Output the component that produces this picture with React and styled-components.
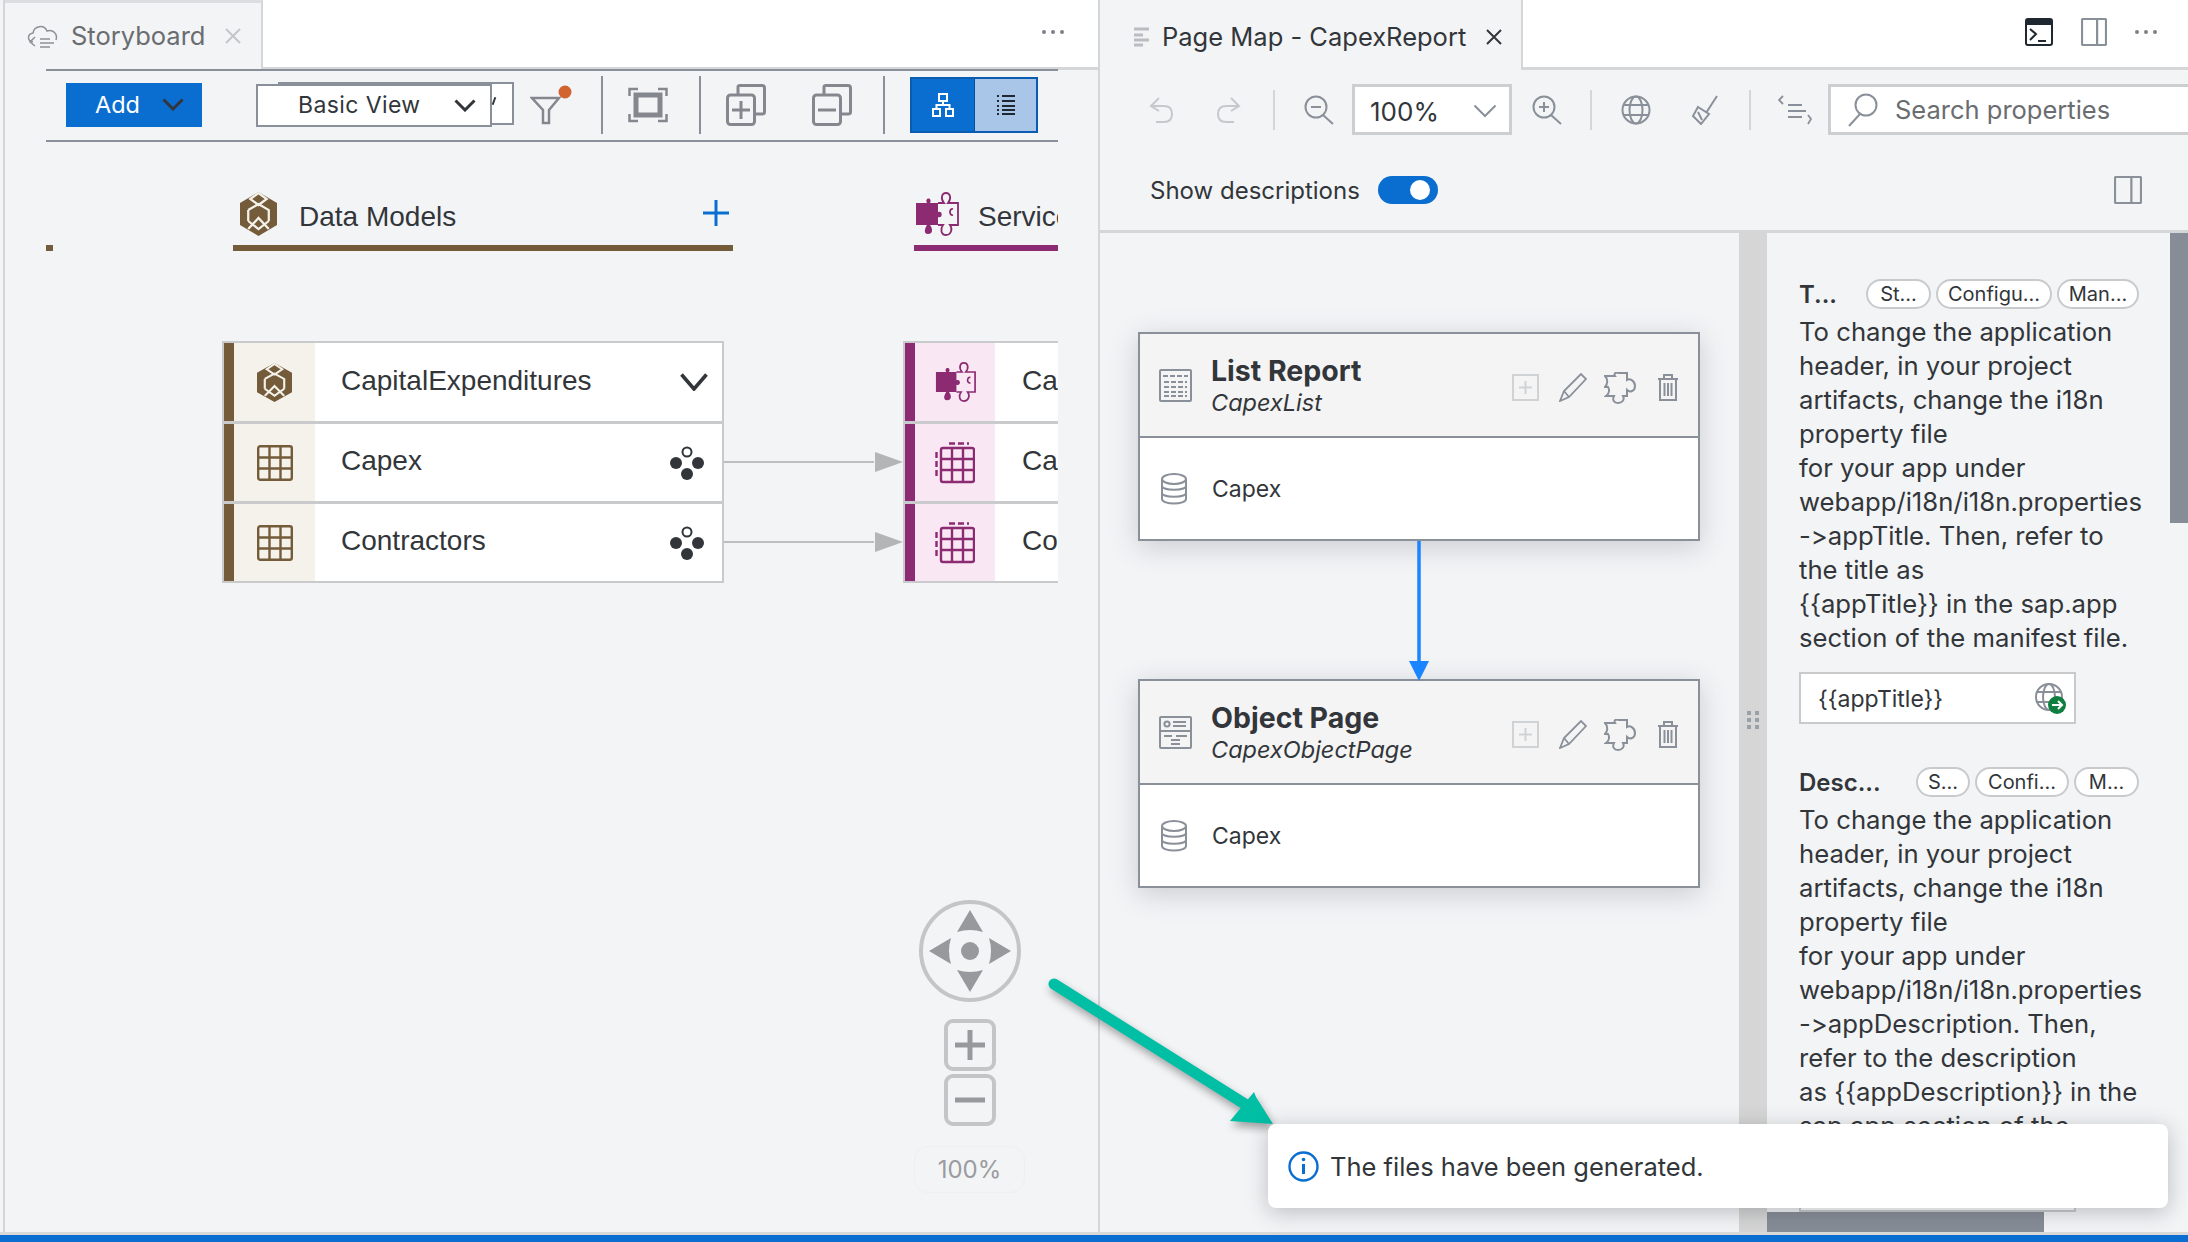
import React from 'react';
import styled, { createGlobalStyle } from 'styled-components';

const GlobalStyle = createGlobalStyle`
  html, body { margin: 0; padding: 0; background: #f3f4f6; }
  * { box-sizing: border-box; }
`;

const SANS = `Inter, "Liberation Sans", sans-serif`;
const ARIAL = `"Liberation Sans", Arial, sans-serif`;
const BROWN = '#745b39';
const MAGENTA = '#8c2a72';
const GREY = '#8a909a';

const Page = styled.div`
  position: relative;
  width: 2188px;
  height: 1242px;
  display: flex;
  flex-direction: column;
  overflow: hidden;
  background: #f3f4f6;
  font-family: ${SANS};
  font-variant-ligatures: none;
  font-feature-settings: 'calt' 0;
  color: #32363a;
`;
const Main = styled.div`
  flex: 1;
  min-height: 0;
  display: flex;
`;
const StatusBar = styled.div`
  height: 10px;
  flex: none;
  background: #0a6ed1;
  border-top: 3px solid #d9d9d9;
`;

/* tabs */
const TabBar = styled.div`
  height: 70px;
  flex: none;
  display: flex;
  align-items: stretch;
`;
const Tab = styled.div`
  width: ${p => p.$width}px;
  flex: none;
  display: flex;
  align-items: center;
  gap: ${p => p.$gap}px;
  padding-left: ${p => p.$pad}px;
  padding-top: ${p => (p.$muted ? 0 : 3)}px;
  padding-bottom: ${p => (p.$muted ? 2 : 0)}px;
  font-size: 25.5px;
  color: ${p => (p.$muted ? '#6a6d70' : '#32363a')};
  border-right: 2px solid #d5d6d8;
  border-top: ${p => (p.$muted ? '3px solid #dcdde0' : '0')};
`;
const TabClose = styled.span`
  display: flex;
  margin-left: ${p => p.$left}px;
`;
const TabRest = styled.div`
  flex: 1;
  background: #fff;
  border-bottom: 3px solid #d5d6d8;
  display: flex;
  align-items: center;
  justify-content: flex-end;
  gap: 28px;
  padding: 0 ${p => p.$pad}px 4px 0;
`;
const Dots = styled.span`
  display: flex;
  gap: 5px;
  & > i {
    width: 4px;
    height: 4px;
    border-radius: 50%;
    background: #7d8187;
  }
`;

/* left pane */
const LeftPane = styled.section`
  position: relative;
  width: 1100px;
  flex: none;
  display: flex;
  flex-direction: column;
  padding-left: 4px;
  border-right: 2px solid #d5d6d8;
  background: #f3f4f6;
  &::before {
    content: '';
    position: absolute;
    left: 3px;
    top: 0;
    bottom: 0;
    width: 2px;
    background: #d5d6d8;
  }
`;
const LeftBody = styled.div`
  width: 1012px;
  margin-left: 42px;
  flex: 1;
  display: flex;
  flex-direction: column;
  min-height: 0;
`;
const Toolbar = styled.div`
  height: 73px;
  flex: none;
  display: flex;
  align-items: center;
  border-top: 2px solid ${GREY};
  border-bottom: 2px solid ${GREY};
  margin-top: -1px;
  padding: 0 0 2px 20px;
`;
const AddButton = styled.div`
  width: 136px;
  height: 44px;
  background: #0a6ed1;
  color: #fff;
  font-size: 23.5px;
  display: flex;
  align-items: center;
  gap: 22px;
  padding-left: 29px;
`;
const SelectStack = styled.div`
  position: relative;
  width: 258px;
  height: 44px;
  margin-left: 54px;
`;
const SelectBack = styled.div`
  position: absolute;
  right: 0;
  top: -1px;
  width: 236px;
  height: 43px;
  background: #fff;
  border: 2px solid ${GREY};
  &::after {
    content: '';
    position: absolute;
    left: 213px;
    top: 13px;
    width: 2px;
    height: 8px;
    background: #32363a;
    transform: rotate(20deg);
  }
`;
const SelectFront = styled.div`
  position: absolute;
  left: 0;
  top: 1px;
  width: 236px;
  height: 43px;
  background: #fff;
  border: 2px solid ${GREY};
  font-size: 23px;
  letter-spacing: 0.4px;
  display: flex;
  align-items: center;
  justify-content: space-between;
  padding: 0 14px 0 40px;
`;
const ToolIcon = styled.span`
  display: flex;
  margin-left: ${p => p.$left || 0}px;
`;
const ToolSep = styled.span`
  width: 2px;
  height: 58px;
  background: ${GREY};
  margin-left: ${p => p.$left}px;
`;
const ViewSwitch = styled.div`
  display: flex;
  width: 128px;
  height: 56px;
  margin-left: 25px;
  border: 2px solid #0a5cb0;
`;
const SwitchBtn = styled.div`
  flex: ${p => (p.$on ? '0 0 63px' : '1')};
  background: ${p => (p.$on ? '#0a6ed1' : '#a9c5e8')};
  display: flex;
  align-items: center;
  justify-content: center;
  border-right: ${p => (p.$on ? '1px solid #0a4f99' : '0')};
`;

const Columns = styled.div`
  flex: none;
  display: flex;
  overflow: hidden;
  height: 450px;
  padding-top: 50px;
`;
const TickMark = styled.span`
  width: 7px;
  height: 6px;
  background: ${BROWN};
  margin-top: 53px;
  flex: none;
`;
const ModelColumn = styled.div`
  flex: none;
  width: ${p => p.$width}px;
  margin-left: ${p => p.$left}px;
`;
const ColumnHead = styled.div`
  height: 59px;
  display: flex;
  align-items: flex-start;
  padding-left: ${p => p.$pad}px;
  gap: ${p => p.$gap}px;
  border-bottom: 6px solid ${p => p.$color};
  font-family: ${ARIAL};
  font-size: 28px;
  white-space: nowrap;
  & > svg { flex: none; }
`;
const HeadLabel = styled.span`
  margin-top: 9px;
`;
const HeadPlus = styled.span`
  margin-left: auto;
  margin-right: 4px;
  margin-top: 8px;
  display: flex;
`;

const Tables = styled.div`
  display: flex;
  align-items: flex-start;
  margin-top: 90px;
  margin-left: -11px;
`;
const EntityTable = styled.div`
  width: ${p => p.$width}px;
  flex: none;
  border: 2px solid #c9cacc;
  border-width: ${p => (p.$open ? '2px 0 2px 2px' : '2px')};
  background: #fff;
`;
const EntityRow = styled.div`
  height: 80px;
  display: flex;
  align-items: center;
  border-top: ${p => (p.$first ? 0 : '3px solid #c9cacc')};
  font-family: ${ARIAL};
  font-size: 28px;
  white-space: nowrap;
  overflow: hidden;
  &:first-child { height: 78px; }
`;
const EntityIcon = styled.span`
  width: ${p => p.$w}px;
  flex: none;
  align-self: stretch;
  background: ${p => p.$bg};
  border-left: 10px solid ${p => p.$color};
  display: flex;
  align-items: center;
  justify-content: center;
`;
const EntityName = styled.span`
  margin-left: ${p => p.$left}px;
  flex: 1;
  padding-bottom: 3px;
`;
const EntityAction = styled.span`
  display: flex;
  margin-right: ${p => p.$right}px;
`;
const Links = styled.div`
  width: 179px;
  flex: none;
  padding-top: 81px;
`;
const LinkSlot = styled.div`
  height: 80px;
  display: flex;
  align-items: center;
`;

const NavControl = styled.div`
  position: absolute;
  left: 914px;
  top: 900px;
  width: 111px;
  display: flex;
  flex-direction: column;
  align-items: center;
`;
const ZoomBox = styled.div`
  width: 52px;
  height: 52px;
  margin-top: ${p => p.$top}px;
  border: 4px solid #c4c5c7;
  border-radius: 9px;
  display: flex;
  align-items: center;
  justify-content: center;
`;
const ZoomLevel = styled.div`
  width: 111px;
  height: 47px;
  margin-top: 20px;
  border: 1px solid #eeeff1;
  border-radius: 14px;
  font-size: 24px;
  color: #9a9c9f;
  display: flex;
  align-items: center;
  justify-content: center;
`;

/* right pane */
const RightPane = styled.section`
  flex: 1;
  min-width: 0;
  display: flex;
  flex-direction: column;
`;
const PropBar = styled.div`
  height: 51px;
  flex: none;
  display: flex;
  align-items: center;
  margin-top: 14px;
`;
const BarIcon = styled.span`
  display: flex;
  flex: none;
  margin-left: ${p => p.$left}px;
`;
const BarSep = styled.span`
  width: 2px;
  height: 40px;
  flex: none;
  background: #d5d6d8;
  margin-left: ${p => p.$left}px;
`;
const ZoomSelect = styled.div`
  width: 160px;
  height: 51px;
  flex: none;
  margin-left: 18px;
  background: #fff;
  border: 3px solid #ccced0;
  font-size: 26px;
  display: flex;
  align-items: center;
  justify-content: space-between;
  padding: 3px 12px 0 15px;
`;
const SearchBox = styled.div`
  flex: 1;
  height: 51px;
  margin-left: 16px;
  margin-right: -4px;
  background: #fff;
  border: 3px solid #ccced0;
  font-size: 25.5px;
  color: #6a6d70;
  display: flex;
  align-items: center;
  gap: 17px;
  padding-left: 17px;
`;
const DescRow = styled.div`
  height: 98px;
  flex: none;
  display: flex;
  align-items: center;
  padding: 15px 46px 0 50px;
  font-size: 24px;
  border-bottom: 3px solid #d5d6d8;
`;
const Toggle = styled.span`
  width: 60px;
  height: 28px;
  border-radius: 14px;
  background: #0a6ed1;
  margin-left: 18px;
  display: flex;
  align-items: center;
  justify-content: flex-end;
  padding-right: 8px;
  & > i {
    width: 20px;
    height: 20px;
    border-radius: 50%;
    background: #fff;
  }
`;
const DescAside = styled.span`
  margin-left: auto;
  display: flex;
`;
const PropBody = styled.div`
  flex: 1;
  min-height: 0;
  display: flex;
`;
const Canvas = styled.div`
  width: 639px;
  flex: none;
  padding: 99px 0 0 38px;
`;
const PageCard = styled.div`
  width: 562px;
  height: 209px;
  border: 2px solid ${GREY};
  background: #fff;
  box-shadow: 0 6px 26px rgba(60, 66, 76, 0.22);
  display: flex;
  flex-direction: column;
`;
const CardHead = styled.div`
  height: 104px;
  flex: none;
  background: #f4f4f4;
  border-bottom: 2px solid ${GREY};
  display: flex;
  align-items: center;
  padding: 1px 0 0 19px;
`;
const CardTitles = styled.div`
  margin-left: 19px;
  flex: 1;
`;
const CardTitle = styled.div`
  font-size: 28.5px;
  line-height: 34px;
  font-weight: 700;
`;
const CardSub = styled.div`
  font-size: 23.5px;
  line-height: 30px;
  font-style: italic;
`;
const CardTools = styled.div`
  display: flex;
  align-items: center;
  gap: 21px;
  padding: 4px 19px 0 0;
  & > svg:nth-child(1) { margin-right: -1px; }
  & > svg:nth-child(2) { margin-right: -4px; }
`;
const CardRow = styled.div`
  flex: 1;
  display: flex;
  align-items: center;
  padding-left: 21px;
  gap: 25px;
  font-size: 23px;
`;
const Connector = styled.div`
  width: 562px;
  height: 140px;
  display: flex;
  justify-content: center;
  position: relative;
  z-index: 1;
  margin-bottom: -2px;
`;
const Splitter = styled.div`
  width: 28px;
  flex: none;
  background: #d6d6d6;
  display: flex;
  align-items: center;
  justify-content: center;
`;
const GripDots = styled.span`
  display: grid;
  grid-template-columns: 4px 4px;
  gap: 3px 4px;
  margin-top: -26px;
  & > i { width: 4px; height: 4px; background: #9aa0a8; }
`;
const Props = styled.div`
  flex: 1;
  min-width: 0;
  position: relative;
  overflow: hidden;
  padding: 46px 0 0 32px;
`;
const PropSection = styled.div`
  margin-bottom: 43px;
`;
const PropHead = styled.div`
  height: 30px;
  display: flex;
  align-items: center;
`;
const PropName = styled.div`
  width: ${p => p.$w}px;
  flex: none;
  font-size: 24px;
  font-weight: 600;
`;
const Pill = styled.span`
  height: 30px;
  width: ${p => p.$w}px;
  flex: none;
  margin-right: 5px;
  border: 2px solid #c9cacc;
  border-radius: 15px;
  background: #fff;
  font-size: 20px;
  display: flex;
  align-items: center;
  justify-content: center;
`;
const PropText = styled.div`
  margin-top: 6px;
  font-size: 25.7px;
  line-height: 34px;
  white-space: nowrap;
`;
const PropInput = styled.div`
  width: 277px;
  height: 52px;
  margin-top: 17px;
  background: #fff;
  border: 2px solid #c9cacc;
  font-size: 23px;
  display: flex;
  align-items: center;
  justify-content: space-between;
  padding: 2px 7px 0 17px;
`;
const Thumb = styled.div`
  position: absolute;
  background: #878d97;
  ${p => p.$vertical
    ? 'right: 0; top: 0; width: 18px; height: 290px;'
    : 'left: 0; bottom: 0; width: 277px; height: 20px;'}
`;

/* overlays */
const Toast = styled.div`
  position: absolute;
  left: 1268px;
  top: 1124px;
  width: 900px;
  height: 84px;
  background: #fff;
  border-radius: 8px;
  box-shadow: 0 4px 22px rgba(40, 44, 52, 0.28);
  display: flex;
  align-items: center;
  gap: 11px;
  padding: 0 0 0 20px;
  font-size: 25.5px;
`;
const CalloutArrow = styled.svg`
  position: absolute;
  left: 1040px;
  top: 970px;
  overflow: visible;
  filter: drop-shadow(2px 5px 4px rgba(0, 0, 0, 0.35));
`;

/* icons */
const Stroke = ({ w, h, color = GREY, sw = 2, children }) => (
  <svg width={w} height={h} viewBox={`0 0 ${w} ${h}`} fill="none" stroke={color} strokeWidth={sw}>{children}</svg>
);
const Chevron = ({ w = 22, h = 13, color = '#32363a', sw = 3 }) => (
  <Stroke w={w} h={h} color={color} sw={sw}><path d={`M1.5 1.5 L${w / 2} ${h - 2} L${w - 1.5} 1.5`} /></Stroke>
);
const CloudIcon = () => (
  <Stroke w={34} h={26} color="#8d9095" sw={1.5}>
    <path d="M7 19 C1 18 1 11 7 10 C8 3 18 1 21 8 C27 6 32 11 30 17" />
    <path d="M9 14 L4 19 L9 23 M14 16 h10 M14 20 h14 M14 24 h10" />
  </Stroke>
);
const CloseX = ({ color }) => (
  <Stroke w={18} h={18} color={color} sw={2}><path d="M2 2 L16 16 M16 2 L2 16" /></Stroke>
);
const FilterIcon = () => (
  <svg width={42} height={40} viewBox="0 0 42 40" fill="none">
    <path d="M2 13 H29 L19 25 V38 H13 V25 Z" stroke="#84888e" strokeWidth="2.5" />
    <circle cx="35" cy="7" r="6.5" fill="#d2652f" />
  </svg>
);
const FitIcon = () => (
  <svg width={40} height={36} viewBox="0 0 40 36" fill="none" stroke="#84888e">
    <path d="M1.5 9 V2 H10 M30 2 H38.5 V9 M1.5 27 V34 H10 M30 34 H38.5 V27" strokeWidth="2.5" />
    <rect x="8" y="8" width="24" height="20" strokeWidth="5" />
  </svg>
);
const StackIcon = ({ plus }) => (
  <svg width={40} height={42} viewBox="0 0 40 42" fill="none" stroke="#84888e" strokeWidth="3">
    <path d="M12 11 V3 Q12 1.5 14 1.5 H36 Q38.5 1.5 38.5 4 V28 Q38.5 30 36 30 H29" />
    <rect x="1.5" y="11" width="27" height="29.5" rx="3" />
    <path d={plus ? 'M15 17 V35 M6 26 H24' : 'M6 26 H24'} />
  </svg>
);
const TreeIcon = () => (
  <Stroke w={22} h={24} color="#fff" sw={2}>
    <rect x="7" y="1" width="8" height="7" />
    <rect x="1" y="16" width="7" height="7" />
    <rect x="14" y="16" width="7" height="7" />
    <path d="M11 8 V12 M4.5 16 V12 H17.5 V16" />
  </Stroke>
);
const ListIcon = () => (
  <Stroke w={20} h={22} color="#1f2730" sw={2}>
    <path d="M1 2 H3 M6 2 H19 M1 7 H3 M6 7 H19 M1 12 H3 M6 12 H19 M1 16 H3 M6 16 H19 M1 20 H3 M6 20 H19" />
  </Stroke>
);
const CubeIcon = ({ w = 37, h = 44 }) => (
  <svg width={w} height={h} viewBox="0 0 36 44" fill="none" preserveAspectRatio="none">
    <path d="M18 0 L36 11 V33 L18 44 L0 33 V11 Z" fill={BROWN} />
    <path d="M10 7 L18 1 L26 7 L18 13 Z M8 18 L18 12 L28 18 V29 M8 29 V18 M8 29 L18 37 L28 29 M8 37 L18 26 L28 37" stroke="#f5f2ec" strokeWidth="2.2" />
  </svg>
);
const PuzzleIcon = ({ w = 44, h = 44 }) => (
  <svg width={w} height={h} viewBox="0 0 44 44" fill="none" preserveAspectRatio="none">
    <path d="M1 11 H12 C9 5 18 5 15 11 H23 V20 C28 18 28 27 23 25 V33 H15 C18 37 18 42 13 42 C8 42 10 36 12 33 H1 Z" fill={MAGENTA} />
    <path d="M23 11 H29 C25 6 27 1 31 1 C35 1 37 6 33 11 H43 V33 H35 C38 37 36 43 31 43 C26 43 25 37 28 33 H23" stroke={MAGENTA} strokeWidth="1.8" />
    <path d="M38 17 C34 16 34 24 38 23" stroke={MAGENTA} strokeWidth="1.8" />
  </svg>
);
const GridIcon = () => (
  <svg width={36} height={36} viewBox="0 0 36 36" fill="none" stroke={BROWN} strokeWidth="2.4">
    <rect x="1.2" y="1.2" width="33.6" height="33.6" rx="2" />
    <path d="M12.5 1 V35 M23.5 1 V35 M1 12.5 H35 M1 23.5 H35" />
  </svg>
);
const DashedGridIcon = () => (
  <svg width={40} height={42} viewBox="0 0 40 42" fill="none" stroke={MAGENTA} strokeWidth="2.4">
    <rect x="6" y="6" width="33" height="34" rx="2" />
    <path d="M17 6 V40 M28 6 V40 M6 17 H39 M6 28 H39" />
    <path d="M14 1.5 H34 M1.5 10 V36" strokeDasharray="6 3" />
  </svg>
);
const DotsIcon = () => (
  <svg width={34} height={34} viewBox="0 0 34 34" fill="#32363a">
    <circle cx="17" cy="6" r="4.5" fill="none" stroke="#32363a" strokeWidth="2" />
    <circle cx="6" cy="17" r="6" />
    <circle cx="28" cy="17" r="6" />
    <circle cx="17" cy="28" r="6" />
  </svg>
);
const LinkArrow = () => (
  <svg width={179} height={22} viewBox="0 0 179 22">
    <path d="M0 11 H150" stroke="#bdbebf" strokeWidth="2" />
    <path d="M151 1 L179 11 L151 21 Z" fill="#b4b5b6" />
  </svg>
);
const PlusMark = ({ size = 26, color = '#0a6ed1', sw = 3 }) => (
  <Stroke w={size} h={size} color={color} sw={sw}>
    <path d={`M${size / 2} 0 V${size} M0 ${size / 2} H${size}`} />
  </Stroke>
);
const PagesIcon = () => (
  <svg width={18} height={20} viewBox="0 0 18 20" stroke="#b9bcc0" strokeWidth="3">
    <path d="M1 2 H16 M1 8 H10 M1 13 H16 M1 18 H10" />
  </svg>
);
const TerminalIcon = () => (
  <svg width={28} height={28} viewBox="0 0 28 28" fill="none">
    <rect x="1" y="1" width="26" height="26" rx="2" stroke="#1f2730" strokeWidth="2" />
    <rect x="1" y="1" width="26" height="6" fill="#1f2730" />
    <path d="M5 11 L11 16 L5 22 M13 23 H21" stroke="#1f2730" strokeWidth="2" />
  </svg>
);
const SplitIcon = ({ h = 28, w = 26 }) => (
  <Stroke w={w} h={h} sw={2.2}>
    <rect x="1" y="1" width={w - 2} height={h - 2} rx="1" />
    <path d={`M${w * 0.62} 1 V${h - 1}`} />
  </Stroke>
);
const UndoIcon = ({ flip }) => (
  <svg width={25} height={26} viewBox="0 0 25 26" fill="none" stroke="#c5c8cc" strokeWidth="2" style={flip ? { transform: 'scaleX(-1)' } : undefined}>
    <path d="M10 1 L2 9 L10 14 M2 9 H15 C21 9 23 13 23 17 C23 22 20 25 15 25 H7" />
  </svg>
);
const MagnifierIcon = ({ plus }) => (
  <Stroke w={30} h={30} sw={2}>
    <circle cx="12" cy="12" r="10.5" />
    <path d="M19 20 L29 29" />
    <path d={plus ? 'M12 7 V17 M7 12 H17' : 'M7 12 H17'} />
  </Stroke>
);
const GlobeIcon = ({ size = 30 }) => (
  <svg width={size} height={size} viewBox="0 0 30 30" fill="none" stroke={GREY} strokeWidth="2">
    <circle cx="15" cy="15" r="13.5" />
    <ellipse cx="15" cy="15" rx="6.5" ry="13.5" />
    <path d="M2 10 H28 M2 20 H28" />
  </svg>
);
const BrushIcon = () => (
  <Stroke w={28} h={30}>
    <path d="M27 1 L16 18 M8 12 L19 19 L11 29 L3 21 Z M8 17 L12 25" />
  </Stroke>
);
const OutlineIcon = () => (
  <Stroke w={34} h={30} sw={1.8}>
    <path d="M5 1 L1 5 L5 9 M10 10 H24 M10 16 H28 M10 22 H24 M30 20 L33 24 L30 29" />
  </Stroke>
);
const SearchGlass = () => (
  <Stroke w={30} h={34} sw={2}>
    <circle cx="18" cy="12" r="10.5" />
    <path d="M12 21 L1 33" />
  </Stroke>
);
const SheetIcon = () => (
  <svg width={33} height={33} viewBox="0 0 33 33" fill="none" stroke={GREY} strokeWidth="2">
    <rect x="1" y="1" width="31" height="31" rx="1" />
    <path d="M4 7 H29 M5 13 H28 M5 18 H28 M5 23 H28 M5 27 H28" strokeDasharray="5 2" />
  </svg>
);
const ObjectIcon = () => (
  <svg width={33} height={33} viewBox="0 0 33 33" fill="none" stroke={GREY} strokeWidth="2">
    <rect x="1" y="1" width="31" height="31" rx="1" />
    <circle cx="8" cy="8" r="2.6" />
    <path d="M14 6 H27 M14 10 H27 M1 15 H32 M5 20 H13 M17 20 H28 M12 24 H21 M12 28 H21" />
  </svg>
);
const DbIcon = () => (
  <Stroke w={26} h={32} sw={2}>
    <ellipse cx="13" cy="6" rx="12" ry="5" />
    <path d="M1 6 V26 C1 32 25 32 25 26 V6 M1 13 C1 18 25 18 25 13 M1 20 C1 25 25 25 25 20" />
  </Stroke>
);
const AddSquare = () => (
  <Stroke w={27} h={27} color="#d0d3d6" sw={2}>
    <rect x="1" y="1" width="25" height="25" />
    <path d="M13.5 7 V20 M7 13.5 H20" />
  </Stroke>
);
const PencilIcon = () => (
  <Stroke w={28} h={29} sw={1.8}>
    <path d="M1 28 L5 18 L22 1 L27 6 L10 24 Z M5 18 L10 24" />
  </Stroke>
);
const PuzzleOutline = () => (
  <Stroke w={32} h={32} sw={2}>
    <path d="M1 4 H11 C9 1 13 0 15 1 H23 V8 C26 6 31 9 31 14 C31 19 26 21 23 18 V24 H19 C21 28 18 31 14 31 C10 31 8 28 10 24 H2 C5 22 6 18 4 15 L1 15 C4 12 4 7 1 4 Z" />
  </Stroke>
);
const TrashIcon = () => (
  <Stroke w={22} h={27} sw={2}>
    <path d="M1 5 H21 M7 5 V1 H15 V5 M3 5 V26 H19 V5 M7.5 9 V22 M11 9 V22 M14.5 9 V22" />
  </Stroke>
);
const TranslateIcon = () => (
  <svg width={32} height={32} viewBox="0 0 32 32" fill="none">
    <circle cx="14" cy="14" r="13" stroke={GREY} strokeWidth="2" />
    <ellipse cx="14" cy="14" rx="6" ry="13" stroke={GREY} strokeWidth="2" />
    <path d="M1 9 H27 M1 19 H27" stroke={GREY} strokeWidth="2" />
    <circle cx="22" cy="22" r="9" fill="#107e3e" />
    <path d="M17 22 H27 M23 18 L27 22 L23 26" stroke="#fff" strokeWidth="2" />
  </svg>
);
const NavPad = () => (
  <svg width={102} height={102} viewBox="0 0 102 102">
    <circle cx="51" cy="51" r="49" fill="none" stroke="#c4c5c7" strokeWidth="4" />
    <g fill="#97999c">
      <path d="M51 10 L64 32 Q51 28 38 32 Z" />
      <path d="M51 92 L64 70 Q51 74 38 70 Z" />
      <path d="M10 51 L32 38 Q28 51 32 64 Z" />
      <path d="M92 51 L70 38 Q74 51 70 64 Z" />
      <circle cx="51" cy="51" r="9" />
    </g>
  </svg>
);
const InfoIcon = () => (
  <svg width={31} height={31} viewBox="0 0 31 31" fill="none">
    <circle cx="15.5" cy="15.5" r="14" stroke="#0a6ed1" strokeWidth="2.4" />
    <path d="M15.5 13 V23" stroke="#0a6ed1" strokeWidth="3" />
    <circle cx="15.5" cy="8.5" r="1.8" fill="#0a6ed1" />
  </svg>
);

const firstText = [
  'To change the application',
  'header, in your project',
  'artifacts, change the i18n',
  'property file',
  'for your app under',
  'webapp/i18n/i18n.properties',
  '->appTitle. Then, refer to',
  'the title as',
  '{{appTitle}} in the sap.app',
  'section of the manifest file.',
];
const secondText = [
  'To change the application',
  'header, in your project',
  'artifacts, change the i18n',
  'property file',
  'for your app under',
  'webapp/i18n/i18n.properties',
  '->appDescription. Then,',
  'refer to the description',
  'as {{appDescription}} in the',
  'sap.app section of the',
];

const entities = [
  { name: 'CapitalExpenditures', service: 'Ca', head: true },
  { name: 'Capex', service: 'Ca' },
  { name: 'Contractors', service: 'Co' },
];

const PageNode = ({ icon, title, sub }) => (
  <PageCard>
    <CardHead>
      {icon}
      <CardTitles>
        <CardTitle>{title}</CardTitle>
        <CardSub>{sub}</CardSub>
      </CardTitles>
      <CardTools>
        <AddSquare />
        <PencilIcon />
        <PuzzleOutline />
        <TrashIcon />
      </CardTools>
    </CardHead>
    <CardRow>
      <DbIcon />
      Capex
    </CardRow>
  </PageCard>
);

const PropBlock = ({ name, nameWidth, pills, lines, value }) => (
  <PropSection>
    <PropHead>
      <PropName $w={nameWidth}>{name}</PropName>
      {pills.map(p => <Pill key={p.label} $w={p.w}>{p.label}</Pill>)}
    </PropHead>
    <PropText>
      {lines.map(line => <div key={line}>{line}</div>)}
    </PropText>
    <PropInput>
      {value}
      <TranslateIcon />
    </PropInput>
  </PropSection>
);

export default function App() {
  return (
    <Page>
      <GlobalStyle />
      <Main>
        <LeftPane>
          <TabBar>
            <Tab $width={259} $pad={22} $gap={11} $muted>
              <CloudIcon />
              Storyboard
              <TabClose $left={8}><CloseX color="#c3c5c8" /></TabClose>
            </Tab>
            <TabRest $pad={34}>
              <Dots><i /><i /><i /></Dots>
            </TabRest>
          </TabBar>
          <LeftBody>
            <Toolbar>
              <AddButton>
                Add
                <Chevron />
              </AddButton>
              <SelectStack>
                <SelectBack />
                <SelectFront>
                  Basic View
                  <Chevron />
                </SelectFront>
              </SelectStack>
              <ToolIcon $left={16}><FilterIcon /></ToolIcon>
              <ToolSep $left={29} />
              <ToolIcon $left={25}><FitIcon /></ToolIcon>
              <ToolSep $left={31} />
              <ToolIcon $left={25}><StackIcon plus /></ToolIcon>
              <ToolIcon $left={46}><StackIcon /></ToolIcon>
              <ToolSep $left={31} />
              <ViewSwitch>
                <SwitchBtn $on><TreeIcon /></SwitchBtn>
                <SwitchBtn><ListIcon /></SwitchBtn>
              </ViewSwitch>
            </Toolbar>
            <Columns>
              <TickMark />
              <ModelColumn $width={500} $left={180}>
                <ColumnHead $color={BROWN} $pad={7} $gap={22}>
                  <CubeIcon />
                  <HeadLabel>Data Models</HeadLabel>
                  <HeadPlus><PlusMark /></HeadPlus>
                </ColumnHead>
                <Tables>
                  <EntityTable $width={502}>
                    {entities.map((e, i) => (
                      <EntityRow key={e.name} $first={i === 0}>
                        <EntityIcon $w={91} $bg="#f5f2ec" $color={BROWN}>
                          {e.head ? <CubeIcon w={35} h={39} /> : <GridIcon />}
                        </EntityIcon>
                        <EntityName $left={26}>{e.name}</EntityName>
                        <EntityAction $right={e.head ? 14 : 18}>
                          {e.head ? <Chevron w={28} h={18} sw={3.6} /> : <DotsIcon />}
                        </EntityAction>
                      </EntityRow>
                    ))}
                  </EntityTable>
                  <Links>
                    {entities.slice(1).map(e => (
                      <LinkSlot key={e.name}><LinkArrow /></LinkSlot>
                    ))}
                  </Links>
                  <EntityTable $width={156} $open>
                    {entities.map((e, i) => (
                      <EntityRow key={e.name} $first={i === 0}>
                        <EntityIcon $w={90} $bg="#f9e8f4" $color={MAGENTA}>
                          {e.head ? <PuzzleIcon w={41} h={40} /> : <DashedGridIcon />}
                        </EntityIcon>
                        <EntityName $left={27}>{e.service}</EntityName>
                      </EntityRow>
                    ))}
                  </EntityTable>
                </Tables>
              </ModelColumn>
              <ModelColumn $width={144} $left={181}>
                <ColumnHead $color={MAGENTA} $pad={1} $gap={19}>
                  <PuzzleIcon />
                  <HeadLabel>Services</HeadLabel>
                </ColumnHead>
              </ModelColumn>
            </Columns>
          </LeftBody>
          <NavControl>
            <NavPad />
            <ZoomBox $top={17}><PlusMark size={30} color="#97999c" sw={5} /></ZoomBox>
            <ZoomBox $top={3}>
              <Stroke w={30} h={6} color="#97999c" sw={5}><path d="M0 3 H30" /></Stroke>
            </ZoomBox>
            <ZoomLevel>100%</ZoomLevel>
          </NavControl>
        </LeftPane>

        <RightPane>
          <TabBar>
            <Tab $width={423} $pad={33} $gap={11}>
              <PagesIcon />
              Page Map - CapexReport
              <TabClose $left={8}><CloseX color="#32363a" /></TabClose>
            </Tab>
            <TabRest $pad={31}>
              <TerminalIcon />
              <SplitIcon />
              <Dots><i /><i /><i /></Dots>
            </TabRest>
          </TabBar>
          <PropBar>
            <BarIcon $left={49}><UndoIcon /></BarIcon>
            <BarIcon $left={42}><UndoIcon flip /></BarIcon>
            <BarSep $left={32} />
            <BarIcon $left={29}><MagnifierIcon /></BarIcon>
            <ZoomSelect>
              100%
              <Chevron w={24} h={14} color={GREY} sw={2} />
            </ZoomSelect>
            <BarIcon $left={20}><MagnifierIcon plus /></BarIcon>
            <BarSep $left={28} />
            <BarIcon $left={29}><GlobeIcon /></BarIcon>
            <BarIcon $left={39}><BrushIcon /></BarIcon>
            <BarSep $left={31} />
            <BarIcon $left={27}><OutlineIcon /></BarIcon>
            <SearchBox>
              <SearchGlass />
              Search properties
            </SearchBox>
          </PropBar>
          <DescRow>
            Show descriptions
            <Toggle><i /></Toggle>
            <DescAside><SplitIcon w={28} h={28} /></DescAside>
          </DescRow>
          <PropBody>
            <Canvas>
              <PageNode icon={<SheetIcon />} title="List Report" sub="CapexList" />
              <Connector>
                <svg width={20} height={140} viewBox="0 0 20 140">
                  <path d="M10 0 V122" stroke="#1b84ff" strokeWidth="3.5" />
                  <path d="M0 120 H20 L10 140 Z" fill="#1b84ff" />
                </svg>
              </Connector>
              <PageNode icon={<ObjectIcon />} title="Object Page" sub="CapexObjectPage" />
            </Canvas>
            <Splitter>
              <GripDots><i /><i /><i /><i /><i /><i /></GripDots>
            </Splitter>
            <Props>
              <PropBlock
                name="T..."
                nameWidth={67}
                pills={[
                  { label: 'St...', w: 65 },
                  { label: 'Configu...', w: 116 },
                  { label: 'Man...', w: 82 },
                ]}
                lines={firstText}
                value="{{appTitle}}"
              />
              <PropBlock
                name="Desc..."
                nameWidth={117}
                pills={[
                  { label: 'S...', w: 54 },
                  { label: 'Confi...', w: 94 },
                  { label: 'M...', w: 65 },
                ]}
                lines={secondText}
                value="{{appDescription}}"
              />
              <Thumb $vertical />
              <Thumb />
            </Props>
          </PropBody>
        </RightPane>
      </Main>
      <StatusBar />

      <CalloutArrow width={240} height={160} viewBox="0 0 240 160">
        <path d="M14 14 L208 136" stroke="#00bfa5" strokeWidth="11" strokeLinecap="round" />
        <path d="M233 154 L216 127 L214 122 L190 151 Z" fill="#00bfa5" />
      </CalloutArrow>
      <Toast>
        <InfoIcon />
        The files have been generated.
      </Toast>
    </Page>
  );
}
